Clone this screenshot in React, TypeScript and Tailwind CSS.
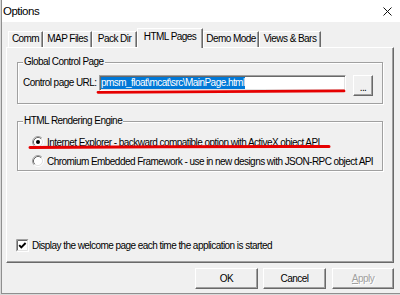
import React from "react";

const font = "font-['Liberation_Sans',Arial,sans-serif] text-[10px] tracking-[-0.55px] text-black";

function Tab({ label, className, selected }: { label: string; className: string; selected?: boolean }) {
  if (selected) {
    return (
      <div
        className={`relative z-10 -mb-px h-[20px] bg-[#f0f0f0] border-l border-t border-white border-r border-r-[#696969] shadow-[inset_-1px_0_0_#a0a0a0] flex justify-center pt-[1px] leading-[13px] ${className}`}
      >
        {label}
      </div>
    );
  }
  return (
    <div
      className={`h-[16px] border-l border-t border-white border-r border-r-[#696969] shadow-[inset_-1px_0_0_#a0a0a0] flex justify-center leading-[13px] ${className}`}
    >
      {label}
    </div>
  );
}

function Radio({ checked }: { checked?: boolean }) {
  return (
    <svg width="12" height="12" viewBox="0 0 12 12" className="shrink-0">
      <circle cx="6" cy="6" r="4.5" fill="#fff" />
      <path d="M2.11 9.89 A5.5 5.5 0 0 1 9.89 2.11" fill="none" stroke="#a0a0a0" />
      <path d="M9.89 2.11 A5.5 5.5 0 0 1 2.11 9.89" fill="none" stroke="#ffffff" />
      <path d="M2.82 9.18 A4.5 4.5 0 0 1 9.18 2.82" fill="none" stroke="#696969" />
      <path d="M9.18 2.82 A4.5 4.5 0 0 1 2.82 9.18" fill="none" stroke="#e3e3e3" />
      {checked && <circle cx="6" cy="6" r="2" fill="#000" />}
    </svg>
  );
}

function Checkbox() {
  return (
    <svg width="13" height="13" viewBox="0 0 13 13" className="shrink-0">
      <rect x="0" y="0" width="13" height="13" fill="#fff" />
      <path d="M0.5 12.5 V0.5 H12.5" fill="none" stroke="#a0a0a0" />
      <path d="M1.5 11.5 V1.5 H11.5" fill="none" stroke="#696969" />
      <path d="M0.5 12.5 H12.5 V0.5" fill="none" stroke="#ffffff" />
      <path d="M1.5 11.5 H11.5 V1.5" fill="none" stroke="#e3e3e3" />
      <path d="M3.2 6.2 L5.3 8.4 L9.6 4" fill="none" stroke="#000" strokeWidth="1.9" />
    </svg>
  );
}

function Button({ children, className }: { children: React.ReactNode; className: string }) {
  return (
    <div
      className={`h-[21px] bg-[#f0f0f0] border border-t-white border-l-white border-r-[#696969] border-b-[#696969] shadow-[inset_-1px_-1px_0_#a0a0a0] flex items-center justify-center leading-[13px] ${className}`}
    >
      {children}
    </div>
  );
}

function Group({ label, children, className }: { label: string; children: React.ReactNode; className: string }) {
  return (
    <div
      className={`relative w-[366px] border border-[#a0a0a0] shadow-[1px_1px_0_#fff,inset_1px_1px_0_#fff] ${className}`}
    >
      <span className="absolute left-[5px] -top-[7px] bg-[#f0f0f0] px-[1px] leading-[12px]">{label}</span>
      {children}
    </div>
  );
}

export default function App() {
  return (
    <div className={`relative w-[400px] h-[295px] overflow-hidden bg-[#d9d9d9] ${font}`}>
      <div className="ml-[1px] w-[399px] h-[294px] border-l border-b border-[#8f8f8f] bg-[#f0f0f0] flex flex-col">
        {/* title bar */}
        <div className="h-[22px] shrink-0 bg-white flex items-center justify-between pl-[1px] pr-[8px]">
          <span className="text-[11.5px] tracking-[-0.5px] leading-[14px]">Options</span>
          <svg width="9" height="9" viewBox="0 0 9 9">
            <path d="M0.5 0.5 L8.5 8.5 M8.5 0.5 L0.5 8.5" stroke="#111" strokeWidth="1" />
          </svg>
        </div>

        {/* body */}
        <div className="pl-[4px] pt-[6px] flex flex-col w-[392px]">
          {/* tabs */}
          <div className="h-[19px] flex items-end pl-[2px]">
            <Tab label="Comm" className="w-[35px]" />
            <Tab label="MAP Files" className="w-[49px]" />
            <Tab label="Pack Dir" className="w-[45px]" />
            <Tab label="HTML Pages" className="w-[66px]" selected />
            <Tab label="Demo Mode" className="w-[56px]" />
            <Tab label="Views & Bars" className="w-[62px]" />
          </div>

          {/* panel */}
          <div className="w-[388px] h-[216px] flex flex-col border border-t-white border-l-white border-r-[#696969] border-b-[#696969] shadow-[inset_-1px_-1px_0_#a0a0a0] pl-[10px] pt-[14px] pb-[10px]">
            <Group label="Global Control Page" className="pt-[12px] pb-[7px] pl-[5px]">
              <div className="flex items-start">
                <span className="w-[76px] leading-[16px]">Control page URL:</span>
                <div className="w-[247px] h-[16px] bg-white border border-t-[#a0a0a0] border-l-[#a0a0a0] border-r-white border-b-white shadow-[inset_1px_1px_0_#696969,inset_-1px_-1px_0_#e3e3e3] pl-[1px] pt-[1px] flex">
                  <span className="bg-[#0078d7] text-white leading-[12px] h-[12px] whitespace-nowrap">
                    pmsm_float\mcat\src\MainPage.html
                  </span>
                </div>
                <Button className="ml-[7px] w-[20px] h-[18px] items-end pb-[3px]">
                  <span className="leading-[8px]">...</span>
                </Button>
              </div>
            </Group>

            <Group label="HTML Rendering Engine" className="mt-[17px] pt-[12px] pb-[1px] pl-[14px]">
              <div className="flex flex-col gap-[3px]">
                <div className="h-[16px] flex items-center">
                  <Radio checked />
                  <span className="ml-[3px] leading-[13px] whitespace-nowrap">
                    Internet Explorer - backward compatible option with ActiveX object API
                  </span>
                </div>
                <div className="h-[16px] flex items-center">
                  <Radio />
                  <span className="ml-[3px] leading-[13px] whitespace-nowrap">
                    Chromium Embedded Framework - use in new designs with JSON-RPC object API
                  </span>
                </div>
              </div>
            </Group>

            <div className="mt-auto -ml-px h-[13px] flex items-center">
              <Checkbox />
              <span className="ml-[3px] leading-[13px] whitespace-nowrap">
                Display the welcome page each time the application is started
              </span>
            </div>
          </div>

          {/* buttons */}
          <div className="w-[388px] mt-[5px] flex justify-end">
            <Button className="w-[63px]">OK</Button>
            <Button className="w-[63px] ml-[5px]">Cancel</Button>
            <Button className="w-[62px] ml-[6px]">
              <span className="text-[#a0a0a0] [text-shadow:1px_1px_0_#fff]">
                <span className="underline">A</span>pply
              </span>
            </Button>
          </div>
        </div>
      </div>

      {/* red annotation strokes */}
      <svg className="absolute left-0 top-0 pointer-events-none" width="400" height="295">
        <path d="M98 92.3 Q 220 91.2 344 90.9" fill="none" stroke="#e60000" strokeWidth="2.8" strokeLinecap="round" />
        <path d="M30 147.6 Q 180 146.2 329 146.4" fill="none" stroke="#e60000" strokeWidth="3" strokeLinecap="round" />
      </svg>
    </div>
  );
}
